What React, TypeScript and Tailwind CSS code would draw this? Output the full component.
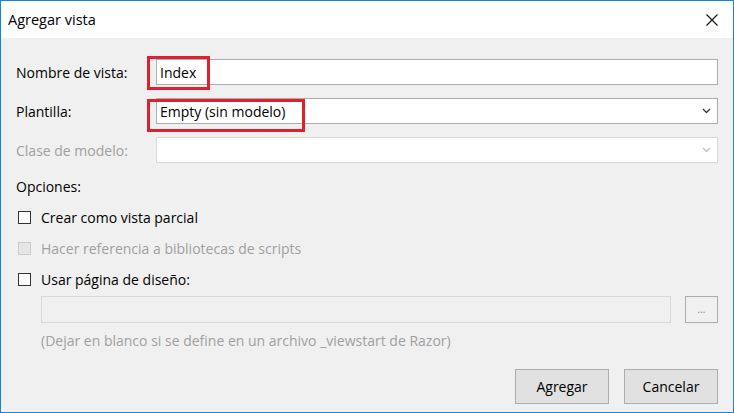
import React from "react";

const font = { fontFamily: '"Open Sans", "Noto Sans", sans-serif' };

function Chevron({ disabled }: { disabled?: boolean }) {
  return (
    <svg width="9" height="6" viewBox="0 0 9 6" className="shrink-0">
      <path
        d="M1 1 L4.5 4.5 L8 1"
        fill="none"
        stroke={disabled ? "#c4c4c4" : "#3a3a3a"}
        strokeWidth="1.4"
      />
    </svg>
  );
}

function Checkbox({ disabled }: { disabled?: boolean }) {
  return (
    <span
      className={`block w-[13px] h-[13px] border shrink-0 ${
        disabled ? "border-[#cccccc] bg-[#e6e6e6]" : "border-[#333333] bg-white"
      }`}
    />
  );
}

function App() {
  return (
    <div
      className="w-[734px] h-[413px] border border-[#1883d7] bg-[#f0f0f0] flex flex-col text-[14px] text-black"
      style={font}
    >
      {/* title bar */}
      <div className="h-[37px] bg-white flex items-center justify-between pl-[7px] pr-[15px] shrink-0">
        <span className="text-[14.5px]">Agregar vista</span>
        <svg width="12" height="12" viewBox="0 0 12 12">
          <path d="M0.5 0.5 L11.5 11.5 M11.5 0.5 L0.5 11.5" stroke="#111" strokeWidth="1.1" />
        </svg>
      </div>

      <div className="flex flex-col flex-1 pl-[15px] pr-[15px] pt-[21px]">
        {/* Nombre de vista */}
        <div className="flex items-center h-[26px]">
          <span className="w-[140px] shrink-0">Nombre de vista:</span>
          <div className="relative flex-1 h-full border border-[#adadad] bg-white flex items-center pl-[3px]">
            <span className="relative z-10">Index</span>
            <span className="absolute left-[-10px] top-[-4px] w-[63px] h-[34px] border-[3px] border-[#e0202e]" />
          </div>
        </div>

        {/* Plantilla */}
        <div className="flex items-center h-[26px] mt-[13px]">
          <span className="w-[140px] shrink-0">Plantilla:</span>
          <div className="relative flex-1 h-full border border-[#adadad] bg-white flex items-center justify-between pl-[3px] pr-[6px]">
            <span className="relative z-10">Empty (sin modelo)</span>
            <Chevron />
            <span className="absolute left-[-10px] top-[0px] w-[158px] h-[33px] border-[3px] border-[#e0202e]" />
          </div>
        </div>

        {/* Clase de modelo */}
        <div className="flex items-center h-[26px] mt-[13px]">
          <span className="w-[140px] shrink-0 text-[#a0a0a0]">Clase de modelo:</span>
          <div className="flex-1 h-full border border-[#d9d9d9] bg-white flex items-center justify-end pr-[6px]">
            <Chevron disabled />
          </div>
        </div>

        <div className="mt-[14px] h-[18px] flex items-center">Opciones:</div>

        <div className="flex flex-col gap-[13px] mt-[13px] pl-[2px]">
          <label className="flex items-center gap-[10px] h-[18px]">
            <Checkbox />
            <span>Crear como vista parcial</span>
          </label>
          <label className="flex items-center gap-[10px] h-[18px] text-[#a0a0a0]">
            <Checkbox disabled />
            <span>Hacer referencia a bibliotecas de scripts</span>
          </label>
          <label className="flex items-center gap-[10px] h-[18px]">
            <Checkbox />
            <span>Usar página de diseño:</span>
          </label>
        </div>

        <div className="flex items-center mt-[8px] pl-[25px] h-[27px]">
          <div className="flex-1 h-full border border-[#d9d9d9] bg-[#f0f0f0]" />
          <div className="w-[33px] h-full ml-[14px] border border-[#adadad] bg-[#f0f0f0] flex items-center justify-center text-[10px] text-[#808080] leading-none pb-[2px]">
            ...
          </div>
        </div>

        <div className="pl-[25px] mt-[7px] h-[20px] flex items-center text-[#a0a0a0]">
          (Dejar en blanco si se define en un archivo _viewstart de Razor)
        </div>

        <div className="flex justify-end gap-[15px] mt-[19px]">
          <button className="w-[94px] h-[35px] border border-[#adadad] bg-[#e1e1e1]">Agregar</button>
          <button className="w-[94px] h-[35px] border border-[#adadad] bg-[#e1e1e1]">Cancelar</button>
        </div>
      </div>
    </div>
  );
}

export default App;
